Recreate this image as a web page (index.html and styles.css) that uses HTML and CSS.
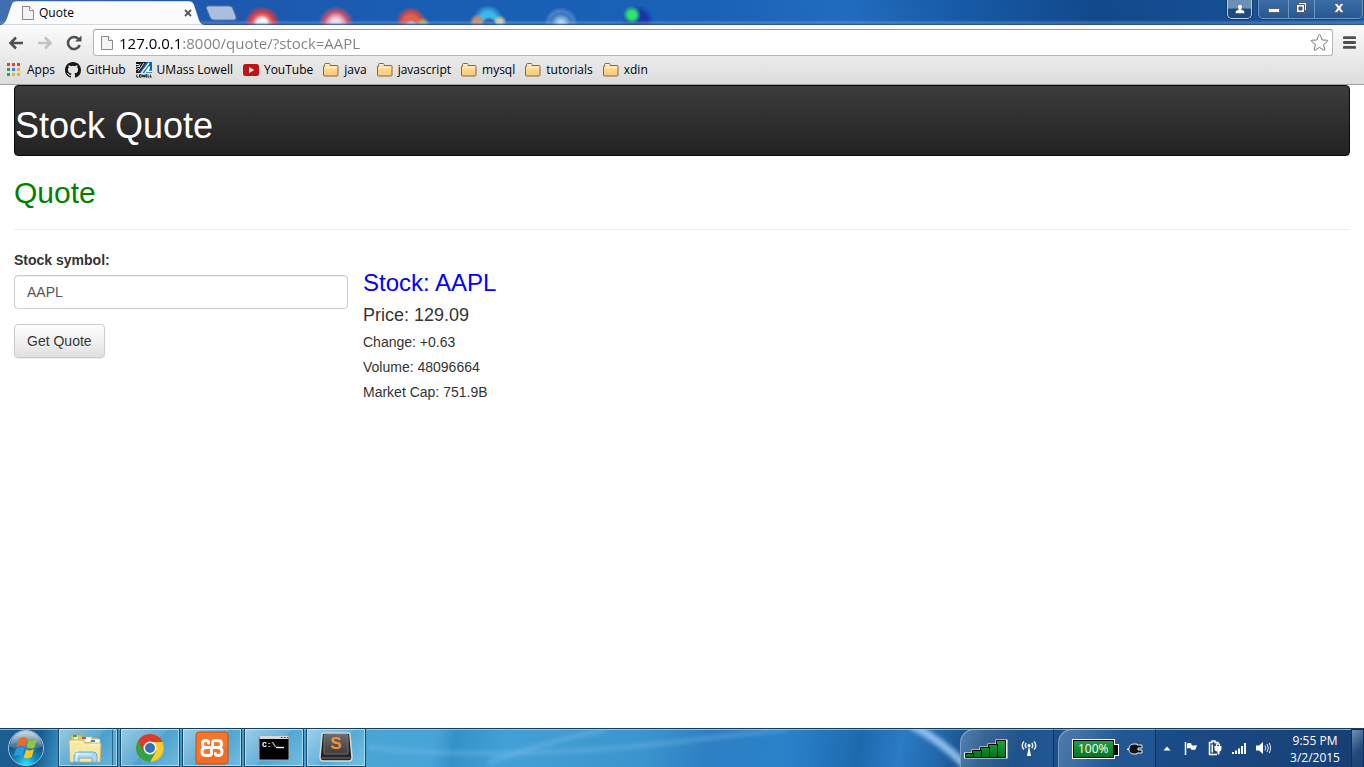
FILE: index.html
```html
<!DOCTYPE html>
<html lang="en">
<head>
<meta charset="utf-8">
<title>Quote</title>
<link rel="stylesheet" href="styles.css">
</head>
<body>
<svg class="defs" aria-hidden="true">
  <defs>
    <linearGradient id="gFolder" x1="0" y1="0" x2="0" y2="1"><stop offset="0" stop-color="#ffe9b8"/><stop offset="1" stop-color="#fbc66e"/></linearGradient>
    <linearGradient id="gDark" x1="0" y1="0" x2="0" y2="1"><stop offset="0" stop-color="#6b6b6b"/><stop offset="1" stop-color="#3e3e3e"/></linearGradient>
    <linearGradient id="gGreen" x1="0" y1="0" x2="0" y2="1"><stop offset="0" stop-color="#1ca53a"/><stop offset="1" stop-color="#03711f"/></linearGradient>
  </defs>
  <symbol id="page" viewBox="0 0 12 14"><path d="M.5.5h7l4 4v9H.5z" fill="#f4f4f4" stroke="#8b8b8b"/><path d="M7.500.5v4h4" fill="#fff" stroke="#8b8b8b"/></symbol>
  <symbol id="folder" viewBox="0 0 16 14"><path d="M.5 12V3.500h1V1.500q0-1 1-1h3.500q1 0 1 1v1h7q1 0 1 1V12q0 1-1 1H1.500q-1 0-1-1z" fill="url(#gFolder)" stroke="#8a6645"/><path d="M1.500 4.500h12.500M3 1.800h3.500" stroke="#fff3d4"/></symbol>
</svg>

<header class="window-top">
  <div class="titlebar">
    <div class="tab">
      <svg class="tab-shape" viewBox="0 0 212 25" preserveAspectRatio="none"><path d="M0 25Q5 24 7 18L12 4Q13.500 1 17 1H195Q198 1 199.500 4L205 20Q206.500 25 212 25z" fill="#fbfbfb" stroke="#28466f" stroke-opacity=".55" stroke-width=".7"/></svg>
      <svg class="tab-icon" width="12" height="14"><use href="#page"/></svg>
      <span class="tab-title">Quote</span>
      <button class="tab-close" aria-label="Close tab"><svg width="8" height="8" viewBox="0 0 8 8"><path d="M1 1l6 6M7 1l-6 6" stroke="#555" stroke-width="1.800"/></svg></button>
    </div>
    <button class="new-tab" aria-label="New tab"><svg width="32" height="16" viewBox="0 0 32 16"><path d="M3 1h21q3 0 4 3l3 8q1 3-2 3H9q-3 0-4-3L1.500 3.500Q1 1 3 1z" fill="#a9bfdb" stroke="#5678ab"/></svg></button>
    <div class="window-controls">
      <button class="profile" aria-label="Profile"><svg width="12" height="12" viewBox="0 0 12 12"><path d="M1.500 10.500V8.500Q2 7 4.600 6.500Q3.500 5 3.500 3.700A2.500 2.500 0 0 1 8.500 3.700Q8.500 5 7.400 6.500Q10 7 10.500 8.500v2z" fill="#fff" stroke="#35516f" stroke-width=".6"/></svg></button>
      <div class="control-group">
        <button class="minimize" aria-label="Minimize"><svg width="14" height="12" viewBox="0 0 14 12"><rect x="1.500" y="6.500" width="11" height="4" rx="1" fill="#f5f5f5" stroke="#555f70"/></svg></button>
        <button class="restore" aria-label="Restore"><svg width="13" height="12" viewBox="0 0 13 12"><path d="M3.500.5h8v8h-8z" fill="#f5f5f5" stroke="#4c5a70"/><path d="M1.500 2.500h8v8h-8z" fill="#f5f5f5" stroke="#4c5a70"/><path d="M4 5h3v3H4z" fill="#2b5d9a" stroke="#4c5a70"/></svg></button>
        <button class="close" aria-label="Close"><svg width="12" height="12" viewBox="0 0 12 12"><path d="M1 1.500h3.200L6 3.700l1.800-2.200H11L7.800 6l3.200 4.500H7.800L6 8.200l-1.800 2.300H1L4.200 6z" fill="#f7f7f7" stroke="#4c5a70" stroke-width=".8"/></svg></button>
      </div>
    </div>
  </div>

  <div class="toolbar">
    <button class="nav-button" aria-label="Back"><svg width="16" height="14" viewBox="0 0 16 14"><path d="M15 7H3M8 1.500L2.500 7 8 12.500" fill="none" stroke="#505050" stroke-width="2.600"/></svg></button>
    <button class="nav-button" aria-label="Forward"><svg width="16" height="14" viewBox="0 0 16 14"><path d="M1 7h12M8 1.500L13.500 7 8 12.500" fill="none" stroke="#c2c2c2" stroke-width="2.600"/></svg></button>
    <button class="nav-button" aria-label="Reload"><svg width="16" height="16" viewBox="0 0 16 16"><path d="M12.500 4A6 6 0 1 0 13.700 10" fill="none" stroke="#505050" stroke-width="2.600"/><path d="M9 6.500h6.500V.5z" fill="#505050"/></svg></button>
    <div class="address">
      <svg width="12" height="14"><use href="#page"/></svg>
      <input class="url" type="text" aria-label="Address" value="127.0.0.1:8000/quote/?stock=AAPL">
      <button class="star" aria-label="Bookmark this page"><svg width="19" height="19" viewBox="0 0 19 19"><path d="M9.500 1.500q.6 0 .9.800l1.700 4.700 5 .2q1.300.2.300 1.200l-3.900 3.200 1.300 4.800q.2 1.300-1 .7L9.500 14.400l-4.300 2.700q-1.200.6-1-.7l1.300-4.800-3.900-3.200q-1-1 .3-1.200l5-.2 1.700-4.700q.3-.8.900-.8z" fill="#fff" stroke="#777" stroke-linejoin="round"/></svg></button>
    </div>
    <button class="menu" aria-label="Menu"><svg width="13" height="13" viewBox="0 0 13 13"><path d="M1.200 1.700h10.600M1.200 6.500h10.600M1.200 11.300h10.600" stroke="#505050" stroke-width="2.800" stroke-linecap="round"/></svg></button>
  </div>

  <nav class="bookmarks" aria-label="Bookmarks">
    <a class="bookmark" href="#"><svg width="15" height="14" viewBox="0 0 15 14"><path d="M0 0h3v3H0zM5 0h3v3H5zM10 0h3v3h-3z" fill="#ed3b31"/><path d="M0 5h3v3H0z" fill="#2e9e54"/><path d="M5 5h3v3H5z" fill="#2f86e8"/><path d="M10 5h3v3h-3zM5 10h3v3H5zM10 10h3v3h-3z" fill="#f5b400"/><path d="M0 10h3v3H0z" fill="#2e9e54"/></svg>Apps</a>
    <a class="bookmark" href="#"><svg width="16" height="16" viewBox="0 0 16 16"><path fill="#161616" d="M8 0C3.580 0 0 3.580 0 8c0 3.540 2.290 6.530 5.470 7.590.4.070.55-.17.55-.38 0-.19-.01-.82-.01-1.490-2.010.37-2.530-.49-2.690-.94-.09-.23-.48-.94-.82-1.130-.28-.15-.68-.52-.01-.53.63-.01 1.080.58 1.230.82.72 1.210 1.870.87 2.330.66.070-.52.280-.87.510-1.070-1.780-.2-3.640-.89-3.640-3.950 0-.87.310-1.590.82-2.150-.08-.2-.36-1.020.08-2.120 0 0 .67-.21 2.200.82a7.600 7.600 0 0 1 4 0c1.530-1.040 2.200-.82 2.200-.82.44 1.100.16 1.920.08 2.120.51.56.82 1.270.82 2.150 0 3.070-1.870 3.750-3.650 3.950.29.25.54.73.54 1.480 0 1.070-.01 1.930-.01 2.200 0 .21.15.46.55.38A8 8 0 0 0 16 8c0-4.420-3.580-8-8-8z"/></svg>GitHub</a>
    <a class="bookmark" href="#"><svg width="16" height="16" viewBox="0 0 16 16"><path d="M0 0h16v11H0z" fill="#0968b2"/><path d="M0 0h10L3 11H0z" fill="#111"/><path d="M0 2.500h3M0 5q2-1 4-.5M0 8q2-2 3-1.500M5 1.500L3 4M8 1L2 9.500" fill="none" stroke="#fff" stroke-width=".9"/><path d="M5.500 11L13 1M9 11l4.500-6.500L12 9.500h4" fill="none" stroke="#fff" stroke-width="1.400"/><path d="M.8 12.500v2.700h1.500M3.400 12.700h1.700v2.500H3.400zM6.200 12.500l.7 2.700.7-2 .7 2 .7-2.700M11 12.700H9.900v2.500H11M9.900 14H11M12 12.500v2.700h1.400M14.400 12.500v2.700h1.400" fill="none" stroke="#111" stroke-width=".9"/></svg>UMass Lowell</a>
    <a class="bookmark" href="#"><svg width="16" height="12" viewBox="0 0 16 12"><rect width="16" height="12" rx="2.500" fill="#bd1512"/><path d="M6 3l5 3-5 3z" fill="#fff"/></svg>YouTube</a>
    <a class="bookmark" href="#"><svg width="16" height="14"><use href="#folder"/></svg>java</a>
    <a class="bookmark" href="#"><svg width="16" height="14"><use href="#folder"/></svg>javascript</a>
    <a class="bookmark" href="#"><svg width="16" height="14"><use href="#folder"/></svg>mysql</a>
    <a class="bookmark" href="#"><svg width="16" height="14"><use href="#folder"/></svg>tutorials</a>
    <a class="bookmark" href="#"><svg width="16" height="14"><use href="#folder"/></svg>xdin</a>
  </nav>
</header>

<main class="page">
  <div class="navbar"><h1>Stock Quote</h1></div>
  <h2>Quote</h2>
  <hr>
  <div class="columns">
    <form class="quote-form">
      <label for="stock">Stock symbol:</label>
      <input id="stock" name="stock" type="text" value="AAPL">
      <button type="button">Get Quote</button>
    </form>
    <section class="result">
      <h3>Stock: AAPL</h3>
      <h4>Price: 129.09</h4>
      <h5>Change: +0.63</h5>
      <h5>Volume: 48096664</h5>
      <h5>Market Cap: 751.9B</h5>
    </section>
  </div>
</main>

<footer class="taskbar">
  <button class="start" aria-label="Start">
    <svg width="38" height="38" viewBox="0 0 38 38">
      <defs>
        <radialGradient id="orb" cx=".5" cy=".95" r=".85"><stop offset="0" stop-color="#22e2ff"/><stop offset=".35" stop-color="#128cc0"/><stop offset=".75" stop-color="#174f7d"/><stop offset="1" stop-color="#5d87a8"/></radialGradient>
        <linearGradient id="shine" x1="0" y1="0" x2="0" y2="1"><stop offset="0" stop-color="#fff" stop-opacity=".65"/><stop offset="1" stop-color="#fff" stop-opacity=".1"/></linearGradient>
      </defs>
      <circle cx="19" cy="19" r="17.500" fill="url(#orb)" stroke="#9cc3dc" stroke-width="1"/>
      <path d="M3 18A16 16 0 0 1 35 18Q19 23 3 18z" fill="url(#shine)"/>
      <path d="M12 10q4-3 8-.5l-2 8q-4-2-8.500.5z" fill="#ee6a24"/><path d="M21.500 10.500q4 2 8.500-.5l-2.500 8.500q-4 2-8-.5z" fill="#8dc63f"/><path d="M9 20q4-3 8.500-.5l-2.200 8q-4-2.500-8.500 0z" fill="#2a9be0"/><path d="M19 20.500q4 2 8-.5l-2.200 8q-4 2.500-8 .5z" fill="#fdc520"/>
    </svg>
  </button>
  <button class="task stacked" aria-label="File Explorer">
    <svg width="36" height="32" viewBox="0 0 36 32">
      <path d="M4 4q0-1 1-1h9l2 3h14q1 0 1 1v20H4z" fill="#e7c864" stroke="#ba9b46" stroke-width=".7"/>
      <path d="M7 3h4v5H7zM17 5h8v5h-8zM24 7h9v6h-9z" fill="#fffef0" stroke="#c3b46f" stroke-width=".5"/><path d="M6 3h4v2H6z" fill="#2eae42"/><path d="M15 5h4v2h-4z" fill="#d94a34"/><path d="M24 8h4v2h-4z" fill="#348bde"/>
      <path d="M2 8h14l2 3h15q1 0 1 1l-1 18H4q-1 0-1-1z" fill="#f8e7a0" stroke="#cfb45e" stroke-width=".8"/>
      <path d="M4 10h11l2 3h15" fill="none" stroke="#fffbdd"/>
      <path d="M7 30v-6q0-4 4-4h15q4 0 4 4v6h-5v-4H12v4z" fill="#a9daf0" stroke="#6eacd0"/><path d="M9 29v-4q0-3 3-3h13" fill="none" stroke="#e9fbff"/><path d="M10 15l.5 6.500 4.500.5-4.500.5-.5 5-.5-5-4.500-.5 4.500-.5z" fill="#fff" opacity=".85"/>
    </svg>
  </button>
  <button class="task" aria-label="Chrome">
    <svg width="30" height="30" viewBox="0 0 30 30"><circle cx="15" cy="15" r="14" fill="#f7cf2c"/><path d="M15 15L2.900 8A14 14 0 0 0 15 29L21 18.500z" fill="#35a147"/><path d="M2.900 8A14 14 0 0 1 27.700 9H15L9 18.500z" fill="#dd3b2d"/><circle cx="15" cy="15" r="6.500" fill="#fff"/><circle cx="15" cy="15" r="5" fill="#3070bd"/><circle cx="15" cy="15" r="13.700" fill="none" stroke="#32516a" stroke-opacity=".3" stroke-width=".6"/></svg>
  </button>
  <button class="task" aria-label="XAMPP">
    <svg width="34" height="34" viewBox="0 0 34 34"><rect x="1" y="1" width="32" height="32" rx="3" fill="#f26d21" stroke="#c65418"/><path d="M2 2h30v14Q17 20 2 30z" fill="#fb873c" opacity=".35"/><path d="M13.500 12Q13.500 9.500 11 9.500Q7.500 9.500 7.500 13Q7.500 16.500 11 16.500H23Q26.500 16.500 26.500 13Q26.500 9.500 23 9.500H20Q17.500 9.500 17.500 12V15M11 16.500Q7 17 7 20.500Q7 24.500 11 24.500H14Q16.500 24.500 16.500 22V19M23 16.500Q27 17 27 20.500Q27 24.500 23 24.500Q20.500 24.500 20.500 22.500" fill="none" stroke="#fff" stroke-width="3" stroke-linecap="round" stroke-linejoin="round"/></svg>
  </button>
  <button class="task" aria-label="Command Prompt">
    <svg width="32" height="28" viewBox="0 0 32 28"><path d="M1 2h30v24H1z" fill="#000" stroke="#a7a7a7"/><path d="M1.500 2h29v3h-29z" fill="#d4d8dc"/><path d="M23 3.500h1.500M26 3.500h1.500M29 3.500h1" stroke="#333"/><text class="prompt" x="4" y="13">C:\</text><path d="M18 13.500h8" stroke="#fff" stroke-width="1.400"/></svg>
  </button>
  <button class="task" aria-label="Sublime Text">
    <svg width="34" height="32" viewBox="0 0 34 32"><path d="M5 1h24q2 0 2 2l2 22q0 4-3 4H4q-3 0-3-4L3 3q0-2 2-2z" fill="#252525" stroke="#d7dde0" stroke-width="1.500"/><path d="M6 2.500h22q1 0 1 1V21q0 1-1 1H6q-1 0-1-1V3.500q0-1 1-1z" fill="url(#gDark)" stroke="#888" stroke-width=".7"/><path d="M2.500 26h29" stroke="#777"/><text class="sublime" x="17" y="17">S</text></svg>
  </button>

  <div class="desktop-glass">
    <svg width="100%" height="100%" viewBox="0 0 594 38" preserveAspectRatio="none" aria-hidden="true">
      <defs><filter id="soft" x="-10%" y="-50%" width="120%" height="200%"><feGaussianBlur stdDeviation="2"/></filter></defs>
      <g fill="none" filter="url(#soft)">
        <path d="M0 18Q70 26 150 24T300 14T420 0" stroke="#8cc7ee" stroke-opacity=".35" stroke-width="4"/>
        <path d="M120 34Q180 12 240 0" stroke="#8cc7ee" stroke-opacity=".3" stroke-width="5"/>
        <path d="M545 -4Q580 14 604 42" stroke="#a8d2fb" stroke-opacity=".8" stroke-width="8"/>
      </g>
    </svg>
  </div>

  <div class="tray">
    <div class="tray-panel signal">
      <svg width="44" height="20" viewBox="0 0 44 20"><path d="M.5 14.500h8v-3h8v-3h8v-3h8v-4h10v17H.5z" fill="#fff" stroke="#fff" stroke-width="2"/><path d="M1.500 14.500h7v-3h8v-3h8v-3h8v-4h9v17h-40z" fill="url(#gGreen)" stroke="#000"/><path d="M9.500 14v4M17.500 11v7M25.500 8v10M33.500 5v13" stroke="#000"/></svg>
      <svg width="16" height="18" viewBox="0 0 16 18"><path d="M8 5.500L6 16h4z" fill="#fff"/><circle cx="8" cy="5.500" r="1.600" fill="#fff"/><path d="M5.300 3q-2 2.500 0 5M3 1.500q-3.600 4 0 8M10.700 3q2 2.500 0 5M13 1.500q3.600 4 0 8" fill="none" stroke="#f2f2f2" stroke-width="1.400"/></svg>
    </div>
    <div class="tray-panel power">
      <span class="battery">100%</span>
      <svg width="16" height="12" viewBox="0 0 16 12"><path d="M0 6h2Q2 1 7 1h3v1h5v3h-4v2h4v3h-5v1H7Q2 11 2 6.500H0" fill="#111" stroke="#e7edf4"/></svg>
    </div>
    <div class="tray-icons">
      <svg width="8" height="5" viewBox="0 0 8 5"><path d="M4 .5L7.500 4.500h-7z" fill="#fff"/></svg>
      <svg width="16" height="16" viewBox="0 0 16 16"><path d="M2.500 2v13" stroke="#fff" stroke-width="1.500"/><path d="M4 3.500q2-1 4.500 0V5q2.500 1 5.500 0l-1.500 4.500q-2 .8-4.500 0V8.500q-2-1-4 0z" fill="#fff"/></svg>
      <svg width="14" height="16" viewBox="0 0 14 16"><path d="M9 14.500H1.500V2.500H4V1h3v1.500h3V5" fill="none" stroke="#fff" stroke-width="1.500"/><path d="M3.500 4.500H5v8H3.500z" fill="#fff"/><path d="M6.500 6h7v3q0 2-2 2.500v2q0 1-1 1t-1-1v-2q-3-.5-3-2.500z" fill="#fff"/><path d="M8.500 3.500V6M11.500 3.500V6" stroke="#fff" stroke-width="1.200"/></svg>
      <svg width="16" height="13" viewBox="0 0 16 13"><path d="M1 10h2v2H1zM4 8.500h2V12H4zM7 6.500h2V12H7zM10 4h2v8h-2zM13 1h2v11h-2z" fill="#fff"/></svg>
      <svg width="15" height="14" viewBox="0 0 15 14"><path d="M0 4.500h3L7 1v12L3 9.500H0z" fill="#fff"/><path d="M9 4.500q1.500 2.500 0 5M11 3q2.800 4 0 8M13 1.800q3.300 5.200 0 10.400" fill="none" stroke="#e4edf6"/></svg>
    </div>
    <time class="clock"><span>9:55 PM</span><span>3/2/2015</span></time>
    <button class="show-desktop" aria-label="Show desktop"></button>
  </div>
</footer>
</body>
</html>
```
FILE: styles.css
```css
* { box-sizing: border-box; }

body {
  margin: 0;
  min-height: 100vh;
  display: flex;
  flex-direction: column;
  background: #fff;
  color: #333;
  font: 14px/20px "Liberation Sans", Arial, sans-serif;
}

button { padding: 0; border: 0; background: none; font: inherit; color: inherit; }
svg { display: block; flex: none; }
.defs { position: absolute; width: 0; height: 0; }

/* Window frame */
.window-top, .taskbar { font: 12px/16px "Open Sans", "Noto Sans", sans-serif; }
.window-top { background: linear-gradient(#fbfbfb 25px, #dcdcdc 84px); border-bottom: 1px solid #a0a0a0; color: #000; }

.titlebar {
  height: 25px;
  display: flex;
  background:
    linear-gradient(transparent 20px, rgba(150, 190, 230, .35) 23px, #24497d 25px),
    radial-gradient(circle at 262px 24px, #fff 5px, #e76969 9px, #cf3e4c 12px, transparent 18px),
    radial-gradient(circle at 336px 24px, #fbe5eb 4px, #e5a4b6 8px, #bd5272 12px, transparent 18px),
    radial-gradient(circle at 411px 27px, #a9c4e8 4px, transparent 7px),
    radial-gradient(circle at 423px 24px, #b9b05f 2px, transparent 7px),
    radial-gradient(circle at 411px 22px, #df604b 7px, #c44950 10px, transparent 15px),
    radial-gradient(circle at 489px 25px, #275ea5 5px, transparent 8px),
    radial-gradient(circle at 500px 22px, #d9d6a3 2px, transparent 7px),
    radial-gradient(circle at 477px 22px, #d48a60 3px, transparent 8px),
    radial-gradient(circle at 488px 20px, #3fb6e8 8px, transparent 15px),
    radial-gradient(circle at 561px 24px, #c6e2ff 2px, #3d76bd 10px, #4583c7 13px, transparent 17px),
    radial-gradient(circle at 632px 15px, #2de56c 4px, transparent 9px),
    radial-gradient(circle at 638px 21px, #1736a6 9px, transparent 16px),
    linear-gradient(75deg, #426fae 0, #1c58ae 220px, #195eb3 420px, #1a62b8 700px, #226cbe 820px, #1659a5 940px, #12498c 1060px, #174f95 1200px, #245c9d 100%);
}

.tab { position: relative; width: 206px; height: 25px; display: flex; align-items: center; padding: 0 14px 0 22px; }
.tab-shape { position: absolute; inset: 0; width: 100%; height: 100%; }
.tab-icon, .tab-title, .tab-close { position: relative; }
.tab-title { flex: 1; margin-left: 5px; }
.tab-close { width: 8px; height: 8px; }
.new-tab { align-self: center; margin: 0 auto 0 -1px; }

.window-controls { display: flex; align-items: flex-start; gap: 6px; padding-right: 1px; }
.window-controls button { height: 18px; display: flex; align-items: center; justify-content: center; }
.window-controls .profile {
  width: 25px; height: 19px;
  border: 1px solid #b9cfe6; border-top: 0; border-radius: 0 0 5px 5px;
  background: linear-gradient(#6d90b9 45%, #1c4a81 50%);
  box-shadow: 0 0 0 1px #143763;
}
.control-group { display: flex; height: 19px; border: 1px solid #6f95c2; border-top: 0; border-radius: 0 0 5px 5px; background: linear-gradient(#3d6da5, #255893); box-shadow: 0 0 0 1px #1c4273; }
.control-group .minimize { width: 30px; border-right: 1px solid #6f95c2; }
.control-group .restore { width: 26px; border-right: 1px solid #6f95c2; }
.close { width: 47px; }
.control-group svg { margin-bottom: 2px; }

.toolbar { height: 35px; display: flex; align-items: center; padding: 0 8px; }
.nav-button { width: 16px; display: flex; justify-content: center; margin-right: 13px; }
.nav-button + .nav-button + .nav-button { margin-right: 11px; }
.address {
  flex: 1; min-width: 0; height: 27px; display: flex; align-items: center; padding: 0 3px 0 7px;
  border: 1px solid #b5b5b5; border-top-color: #999; border-radius: 3px; background: #fff;
}
.url {
  flex: 1; min-width: 0; height: 24px; margin-left: 6px; padding: 0; border: 0; outline: 0;
  font: 15px/24px "Open Sans", "Noto Sans", sans-serif;
  color: transparent;
  background: linear-gradient(90deg, #000 62px, #808080 62px);
  -webkit-background-clip: text;
  background-clip: text;
}
.menu { margin-left: 10px; }

.bookmarks { height: 24px; display: flex; align-items: center; gap: 10px; padding: 0 7px 4px; }
.bookmark { display: flex; align-items: center; gap: 5px; color: #000; text-decoration: none; white-space: nowrap; }

/* Page */
.page { flex: 1; padding: 0 14px; }
h1, h2, h3, h4, h5 { font-weight: 400; margin: 0; }
.navbar { padding: 20px 0 10px; border: 1px solid #090909; border-radius: 4px; background: linear-gradient(#3c3c3c, #222); color: #fff; }
h1 { font-size: 36px; line-height: 39px; }
h2 { margin-top: 20px; font-size: 30px; line-height: 33px; color: green; }
hr { margin: 20px 0; border: 0; border-top: 1px solid #eee; }

.columns { display: grid; grid-template-columns: 1fr 3fr; }
.quote-form label { display: block; margin-bottom: 5px; font-weight: 700; }
.quote-form input {
  display: block; width: 100%; height: 34px; padding: 6px 12px; margin-bottom: 15px;
  border: 1px solid #ccc; border-radius: 4px; box-shadow: inset 0 1px 1px rgba(0, 0, 0, .075);
  color: #555; font: inherit; background: #fff;
}
.quote-form button {
  height: 34px; padding: 0 12px; border: 1px solid #ccc; border-radius: 4px;
  background: linear-gradient(#fff, #e0e0e0); box-shadow: 0 1px 1px rgba(0, 0, 0, .075); text-shadow: 0 1px 0 #fff;
}
.result { padding: 20px 0 0 15px; }
h3 { font-size: 24px; line-height: 26px; color: blue; }
h4 { margin: 10px 0; font-size: 18px; line-height: 19px; }
h5 { margin-bottom: 10px; font-size: 14px; line-height: 15px; }

/* Taskbar */
.taskbar {
  height: 39px; display: flex; border-top: 1px solid #173a57; box-shadow: inset 0 1px 0 rgba(190, 225, 245, .65);
  background: linear-gradient(100deg, #1c5f92 0, #185a90 40px, #368fc0 62px, #4aa5d5 370px, #48a3d8 430px, #3492c8 450px, #43a0d6 500px, #3b94cd 640px, #2d7fc4 700px, #2982c9 780px, #1e69ae 850px, #2a7cc5 890px, #2166a9 930px, #174577 970px, #1d5290 1060px, #173e73 100%);
  color: #fff;
}
.start { width: 52px; display: flex; align-items: center; justify-content: center; margin-right: 6px; }
.task {
  width: 60px; display: flex; align-items: center; justify-content: center; margin-right: 2px;
  border: 1px solid #174967; border-top: 0;
  background: linear-gradient(135deg, rgba(205, 233, 246, .65), rgba(144, 202, 231, .45) 48%, rgba(100, 180, 220, .4) 52%, rgba(151, 214, 240, .55));
  box-shadow: inset 0 0 0 1px rgba(207, 237, 250, .65);
}
.stacked { padding-right: 6px; box-shadow: inset 0 0 0 1px rgba(207, 237, 250, .65), inset -4px 0 0 0 rgba(110, 190, 225, .8), inset -5px 0 0 0 #28668a; }
.prompt { font: 700 8px "Liberation Mono", monospace; fill: #fff; }
.sublime { font: 700 17px "Liberation Sans", sans-serif; fill: #f59332; text-anchor: middle; }
.desktop-glass { flex: 1; min-width: 0; overflow: hidden; }

.tray { display: flex; }
.tray-panel { display: flex; align-items: center; border-right: 1px solid #10305a; border-left: 1px solid rgba(180, 205, 230, .6); border-top: 1px solid rgba(180, 205, 230, .6); border-radius: 14px 0 0 0; background: linear-gradient(110deg, rgba(160, 190, 215, .4), rgba(50, 105, 165, .3) 60%); }
.signal { width: 94px; gap: 13px; padding-left: 3px; margin-right: 4px; }
.power { width: 98px; gap: 12px; padding-left: 13px; }
.battery { position: relative; width: 43px; height: 20px; border: 1px solid #fff; outline: 1px solid #000; outline-offset: -2px; padding-left: 5px; line-height: 17px; background: linear-gradient(#23a044, #03731f); }
.battery::after { content: ""; position: absolute; left: 41px; top: 4px; width: 4px; height: 10px; background: #000; border: 1px solid #fff; border-left: 0; }
.tray-icons { display: flex; align-items: center; gap: 9px; padding-left: 7px; }
.tray-icons svg:first-child { margin-right: 3px; }
.clock { width: 80px; padding: 2px 0 0 8px; display: flex; flex-direction: column; align-items: center; justify-content: center; line-height: 17px; }
.show-desktop { width: 13px; border: 1px solid #0c2e57; border-bottom: 0; background: linear-gradient(135deg, #7391b1, #234b7d 55%, #1c4070); }
```
